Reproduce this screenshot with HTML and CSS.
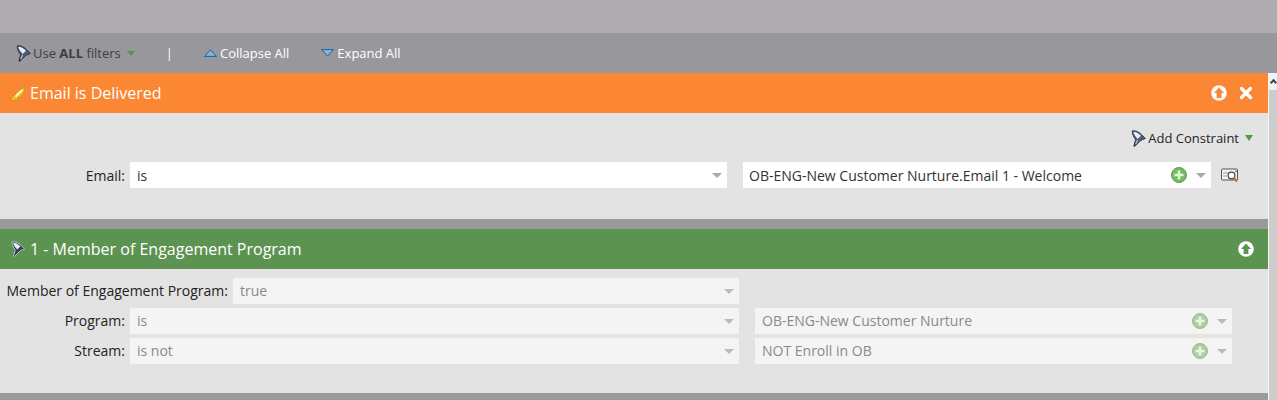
FILE: index.html
```html
<!DOCTYPE html>
<html lang="en">
<head>
  <meta charset="UTF-8" />
  <title>Smart List Filters</title>
  <link rel="stylesheet" href="styles.css">
</head>
<body>
  <svg class="defs" width="0" height="0">
    <defs>
      <symbol id="funnel" viewBox="0 0 15 17">
        <path d="M1.4 .8 C5 .4 8.4 2.4 10.4 4.4 L14.4 8.4 L9.8 10.4 L3.8 16.4 L2.8 16 L4.6 9.8 C2.6 6.6 .8 3.6 1.4 .8 Z" fill="#4d5d74" stroke="#1d2736" stroke-width=".8" stroke-linejoin="round"/>
        <path d="M2.4 1.8 C5 1.8 8 3.6 10 5.8 L6.6 9 C4.4 6.6 2.6 4 2.4 1.8 Z" fill="#e8eef4"/>
        <path d="M6.6 10 L4.8 14" stroke="#b4c2d2" stroke-width="1.2"/>
      </symbol>
      <symbol id="plus" viewBox="0 0 16 16">
        <circle cx="8" cy="8" r="7.5" fill="#6fbf5a" stroke="#6d8f68"/>
        <path d="M8 3.5v9M3.5 8h9" stroke="#e9f7e3" stroke-width="2.6"/>
      </symbol>
      <symbol id="up" viewBox="0 0 16 16">
        <circle cx="8" cy="8" r="7.8" fill="#fff"/>
        <path d="M8 2.6 L13 8 H10.4 V13 H5.6 V8 H3 Z" fill="currentColor"/>
      </symbol>
      <symbol id="tri-up" viewBox="0 0 13 8">
        <path d="M6.5 .8 L12.4 7.4 H.6 Z" fill="#7fb4dc" stroke="#1f5f94"/>
      </symbol>
      <symbol id="tri-down" viewBox="0 0 13 8">
        <path d="M.6 .6 H12.4 L6.5 7.2 Z" fill="#7fb4dc" stroke="#1f5f94"/>
      </symbol>
    </defs>
  </svg>

  <div class="top-band"></div>

  <div class="toolbar">
    <svg class="funnel"><use href="#funnel"/></svg>
    <span class="use-all">Use <b>ALL</b> filters</span>
    <i class="tri-green small"></i>
    <span class="divider">|</span>
    <span class="tool"><svg class="tri-blue"><use href="#tri-up"/></svg>Collapse All</span>
    <span class="tool"><svg class="tri-blue"><use href="#tri-down"/></svg>Expand All</span>
  </div>

  <div class="panel">
    <div class="filter">
      <div class="filter-head orange">
        <svg class="head-icon" viewBox="0 0 16 16">
          <path d="M1 15.8 L2 10.4 L4.5 10.8 L7 6.4 L15.3 1.6 L13.5 8.8 L10 12.4 L8 12.2 L8 14.8 Z" fill="#f2b92e" stroke="#c08d1e" stroke-width=".7" stroke-linejoin="round"/>
          <path d="M5.4 11.8 L12.4 5" stroke="#fff0b0" stroke-width="2"/>
        </svg>
        <span class="head-title">Email is Delivered</span>
        <svg class="head-btn"><use href="#up"/></svg>
        <svg class="close-btn" viewBox="0 0 14 14"><path d="M2.5 2.5 L11.5 11.5 M11.5 2.5 L2.5 11.5" stroke="#fff" stroke-width="3.4" stroke-linecap="round"/></svg>
      </div>
      <div class="filter-body first-body">
        <div class="constraint-row">
          <svg class="funnel"><use href="#funnel"/></svg>
          <span>Add Constraint</span>
          <i class="tri-green"></i>
        </div>
        <div class="row email-row">
          <label class="row-label email-label">Email:</label>
          <div class="select email-op"><span>is</span><i class="caret"></i></div>
          <div class="select email-val">
            <span>OB-ENG-New Customer Nurture.Email 1 - Welcome</span>
            <svg class="plus"><use href="#plus"/></svg>
            <i class="caret"></i>
          </div>
          <svg class="preview" viewBox="0 0 18 15">
            <rect x=".5" y="1" width="16" height="11" rx="1" fill="#f4f4f4" stroke="#555"/>
            <path d="M2 5h5M2 8h4" stroke="#999"/>
            <circle cx="10.5" cy="7.5" r="3.4" fill="#fff" stroke="#444" stroke-width="1.2"/>
            <path d="M13 10 L16 13.5" stroke="#b07a2a" stroke-width="2"/>
            <path d="M14 2.2h2v2h-2z" fill="#7fb25f"/>
          </svg>
        </div>
      </div>
    </div>

    <div class="separator"></div>

    <div class="filter">
      <div class="filter-head green">
        <svg class="head-icon funnel-light" viewBox="0 0 15 17">
          <path d="M1.4 .8 C5 .4 8.4 2.4 10.4 4.4 L14.4 8.4 L9.8 10.4 L3.8 16.4 L2.8 16 L4.6 9.8 C2.6 6.6 .8 3.6 1.4 .8 Z" fill="#2f4057" stroke="#cfdde9" stroke-width=".8" stroke-linejoin="round"/>
          <path d="M2.4 1.8 C5 1.8 8 3.6 10 5.8 L6.6 9 C4.4 6.6 2.6 4 2.4 1.8 Z" fill="#e8eff5"/>
        </svg>
        <span class="head-title">1 - Member of Engagement Program</span>
        <svg class="head-btn"><use href="#up"/></svg>
      </div>
      <div class="filter-body second-body">
        <div class="row disabled">
          <label class="row-label wide-label">Member of Engagement Program:</label>
          <div class="select true-op"><span>true</span><i class="caret"></i></div>
        </div>
        <div class="row disabled">
          <label class="row-label narrow-label">Program:</label>
          <div class="select op"><span>is</span><i class="caret"></i></div>
          <div class="select val">
            <span>OB-ENG-New Customer Nurture</span>
            <svg class="plus"><use href="#plus"/></svg>
            <i class="caret"></i>
          </div>
        </div>
        <div class="row disabled">
          <label class="row-label narrow-label">Stream:</label>
          <div class="select op"><span>is not</span><i class="caret"></i></div>
          <div class="select val">
            <span>NOT Enroll in OB</span>
            <svg class="plus"><use href="#plus"/></svg>
            <i class="caret"></i>
          </div>
        </div>
      </div>
    </div>

    <div class="separator"></div>
    <div class="scrollbar"><div class="scroll-btn"><i class="scroll-arrow"></i></div></div>
  </div>
</body>
</html>
```

FILE: styles.css
```css
* {
  box-sizing: border-box;
  margin: 0;
  padding: 0;
}

body {
  background: #e3e3e3;
  color: #222;
  font-family: "Open Sans", sans-serif;
  font-size: 13px;
  height: 400px;
  overflow: hidden;
}

.defs {
  display: block;
  height: 0;
}

.top-band {
  background: #aeacb1;
  height: 33px;
}

.toolbar {
  align-items: center;
  background: #98979c;
  color: #fff;
  display: flex;
  height: 40px;
  padding-left: 16px;
}

.funnel {
  flex: none;
  height: 17px;
  width: 15px;
}

.use-all {
  color: #3d3d44;
  margin-left: 2px;
}

.tri-green {
  border-left: 4px solid transparent;
  border-right: 4px solid transparent;
  border-top: 6px solid #4f9a3c;
  display: inline-block;
  margin-left: 4px;
}

.tri-green.small {
  border-top-width: 5px;
  margin-left: 6px;
}

.divider {
  margin-left: 31px;
  margin-right: 31px;
}

.tool {
  align-items: center;
  display: flex;
  gap: 3px;
  margin-right: 32px;
}

.tri-blue {
  flex: none;
  height: 8px;
  width: 13px;
}

.panel {
  position: relative;
}

.filter-head {
  align-items: center;
  color: #fff;
  display: flex;
  font-size: 16px;
  height: 40px;
  margin-right: 9px;
  padding-left: 10px;
}

.filter-head.orange {
  background: #fb8633;
}

.filter-head.green {
  background: #5c9350;
}

.head-icon {
  flex: none;
  height: 16px;
  margin-right: 4px;
  width: 16px;
}

.head-title {
  flex: 1;
}

.head-btn {
  height: 16px;
  width: 16px;
}

.orange .head-btn {
  color: #fb8633;
  margin-right: 12px;
}

.green .head-btn {
  color: #5c9350;
  margin-right: 14px;
}

.close-btn {
  height: 14px;
  margin-right: 15px;
  width: 14px;
}

.first-body {
  height: 106px;
  padding-top: 16px;
}

.second-body {
  display: flex;
  flex-direction: column;
  gap: 4px;
  height: 124px;
  padding-top: 9px;
}

.constraint-row {
  align-items: center;
  display: flex;
  gap: 2px;
  justify-content: flex-end;
  margin-right: 24px;
}

.row {
  align-items: center;
  display: flex;
  font-size: 14px;
}

.email-row {
  margin-top: 15px;
}

.row-label {
  flex: none;
  margin-right: 5px;
  text-align: right;
}

.email-label,
.narrow-label {
  width: 125px;
}

.wide-label {
  padding-left: 6px;
  width: 228px;
}

.select {
  align-items: center;
  background: #fff;
  color: #333;
  display: flex;
  flex: none;
  height: 26px;
  justify-content: space-between;
  padding: 0 5px 0 7px;
}

.email-op {
  width: 597px;
}

.email-val {
  margin-left: 16px;
  padding-left: 6px;
  width: 468px;
}

.email-val span,
.val span {
  flex: 1;
}

.true-op {
  width: 506px;
}

.op {
  width: 609px;
}

.val {
  margin-left: 16px;
  width: 477px;
}

.disabled .select {
  background: #f4f4f4;
  color: #8a8a8a;
}

.disabled .select span,
.disabled .row-label {
  padding-bottom: 2px;
}

.caret {
  border-left: 5px solid transparent;
  border-right: 5px solid transparent;
  border-top: 5px solid #aaa;
  display: inline-block;
  flex: none;
}

.plus {
  flex: none;
  height: 16px;
  margin-right: 9px;
  width: 16px;
}

.disabled .plus {
  opacity: .6;
}

.disabled .caret {
  border-top-color: #bbb;
}

.preview {
  height: 15px;
  margin-left: 10px;
  width: 18px;
}

.separator {
  background: #9a9a9a;
  height: 10px;
  margin-right: 9px;
}

.scrollbar {
  background: #cdcdcd;
  border-left: 1px solid #f4f4f4;
  bottom: 0;
  position: absolute;
  right: 0;
  top: 0;
  width: 9px;
}

.scroll-btn {
  background: #f1f1f1;
  height: 17px;
  padding-top: 7px;
}

.scroll-arrow {
  border-left: 2px solid #444;
  border-top: 2px solid #444;
  display: block;
  height: 5px;
  margin-left: 2px;
  transform: rotate(45deg);
  width: 5px;
}
```
